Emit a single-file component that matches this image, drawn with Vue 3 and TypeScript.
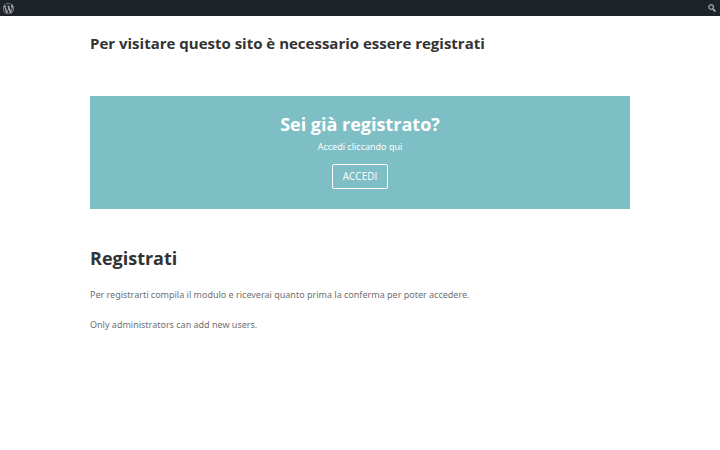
<script setup lang="ts">
const title: string = 'Per visitare questo sito è necessario essere registrati'
</script>

<template>
  <div class="page">
    <header class="bar">
      <a href="#" class="logo" aria-label="WordPress">
        <svg width="11" height="11" viewBox="0 0 20 20" aria-hidden="true">
          <path fill="#a7aaad" d="M20 10c0-5.51-4.49-10-10-10C4.48 0 0 4.49 0 10c0 5.52 4.48 10 10 10 5.51 0 10-4.48 10-10zM7.78 15.37L4.37 6.22c.55-.02 1.17-.08 1.17-.08.5-.06.44-1.13-.06-1.11 0 0-1.45.11-2.37.11-.18 0-.37 0-.58-.01C4.12 2.69 6.87 1.11 10 1.11c2.33 0 4.45.87 6.05 2.34-.68-.11-1.65.39-1.65 1.58 0 .74.45 1.36.9 2.1.35.61.55 1.36.55 2.46 0 1.49-1.4 5-1.4 5l-3.03-8.37c.54-.02.82-.17.82-.17.5-.05.44-1.25-.06-1.22 0 0-1.44.12-2.38.12-.87 0-2.33-.12-2.33-.12-.5-.03-.56 1.2-.06 1.22l.92.08 1.26 3.41zM17.41 10c.24-.64.74-1.87.43-4.25.7 1.29 1.05 2.71 1.05 4.25 0 3.29-1.73 6.24-4.4 7.78.97-2.59 1.94-5.2 2.92-7.78zM6.1 18.09C3.12 16.65 1.11 13.53 1.11 10c0-1.3.23-2.48.72-3.59C3.25 10.3 4.67 14.2 6.1 18.09zm4.03-6.63l2.58 6.98c-.86.29-1.76.45-2.71.45-.79 0-1.57-.11-2.29-.33.81-2.38 1.62-4.74 2.42-7.1z" />
        </svg>
      </a>
      <button type="button" class="search" aria-label="Cerca">
        <svg width="10" height="10" viewBox="0 0 20 20" aria-hidden="true">
          <path fill="#a7aaad" stroke="#a7aaad" stroke-width="0.6" d="M12.14 4.18c1.87 1.87 2.11 4.75.72 6.89.12.1.22.21.36.31.2.16.47.36.81.59.34.24.56.39.66.47.42.31.73.57.94.78.32.32.6.65.84 1 .25.35.44.69.59 1.04.14.35.21.68.18 1-.02.32-.14.59-.36.81s-.49.34-.81.36c-.31.02-.65-.04-.99-.19-.35-.14-.7-.34-1.04-.59-.35-.24-.68-.52-1-.84-.21-.21-.47-.52-.77-.93-.1-.13-.25-.35-.47-.66-.22-.32-.4-.57-.56-.78-.16-.2-.29-.35-.44-.5-2.07 1.09-4.69.76-6.44-.98-2.14-2.15-2.14-5.64 0-7.78 2.15-2.15 5.63-2.15 7.78 0zm-1.41 6.36c1.36-1.37 1.36-3.58 0-4.95-1.37-1.37-3.59-1.37-4.95 0-1.37 1.37-1.37 3.58 0 4.95 1.36 1.37 3.58 1.37 4.95 0z" />
        </svg>
      </button>
    </header>
    <main class="content">
      <h1>{{ title }}</h1>
      <section class="promo">
        <h2>Sei già registrato?</h2>
        <p>Accedi cliccando qui</p>
        <a href="#" class="login">ACCEDI</a>
      </section>
      <section class="register">
        <h2>Registrati</h2>
        <p>Per registrarti compila il modulo e riceverai quanto prima la conferma per poter accedere.</p>
        <p>Only administrators can add new users.</p>
      </section>
    </main>
  </div>
</template>

<style>
body {
  background: #fff;
}
</style>

<style scoped>
.page {
  font-family: "Open Sans", Arial, sans-serif;
  font-size: 9px;
  line-height: 15px;
  color: #707070;
}
.bar {
  display: flex;
  justify-content: space-between;
  align-items: center;
  height: 16px;
  padding: 0 3px;
  background: #1d2327;
}
.logo,
.search {
  display: flex;
  padding: 0;
  border: 0;
  background: none;
}
.content {
  width: 75%;
  margin: 0 auto;
  padding-top: 17px;
}
h1,
h2,
p {
  margin: 0;
}
p {
  font-family: "Noto Sans", "Open Sans", sans-serif;
}
h1 {
  color: #333;
  font-size: 15px;
  line-height: 20px;
}
h2 {
  font-size: 18px;
  line-height: 24px;
}
.promo {
  display: flex;
  flex-direction: column;
  align-items: center;
  margin-top: 43px;
  padding: 16px 20px 20px;
  background: #7ebec5;
  color: #fff;
}
.promo p {
  margin-top: 3px;
}
.login {
  margin-top: 10px;
  padding: 3px 10px;
  border: 1px solid #fff;
  border-radius: 2px;
  color: #fff;
  font-size: 10px;
  line-height: 17px;
  text-decoration: none;
}
.register {
  padding-top: 37px;
}
.register h2 {
  margin-bottom: 17px;
  color: #333;
}
.register p {
  margin-bottom: 15px;
}
</style>
